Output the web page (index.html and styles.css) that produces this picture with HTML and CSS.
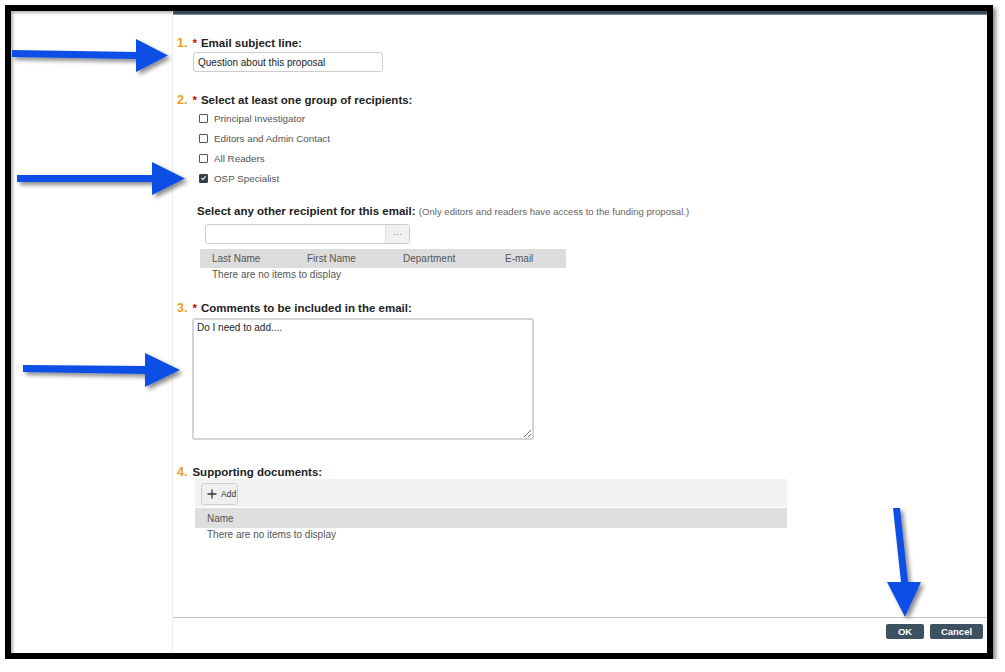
FILE: index.html
```html
<!DOCTYPE html>
<html lang="en">
  <head>
    <meta charset="UTF-8" />
    <meta name="viewport" content="width=device-width, initial-scale=1.0" />
    <title>Email about this proposal</title>
    <link rel="stylesheet" href="styles.css">
  </head>
  <body>
    <div class="frame">
      <div class="side"></div>
      <div class="main">
        <div class="topbar"></div>
        <div class="form">
          <!-- 1. subject -->
          <div class="field field-subject">
            <div class="label"><span class="num">1.</span><span class="req">*</span>Email subject line:</div>
            <input class="text-input subject" type="text" value="Question about this proposal" />
          </div>

          <!-- 2. recipients -->
          <div class="field field-groups">
            <div class="label"><span class="num">2.</span><span class="req">*</span>Select at least one group of recipients:</div>
            <div class="checks">
              <label class="check"><span class="box"></span>Principal Investigator</label>
              <label class="check"><span class="box"></span>Editors and Admin Contact</label>
              <label class="check"><span class="box"></span>All Readers</label>
              <label class="check">
                <span class="box checked">
                  <svg viewBox="0 0 10 10"><path d="M2 5.2 4.1 7.2 8 2.8" fill="none" stroke="#fff" stroke-width="1.6" /></svg>
                </span>OSP Specialist
              </label>
            </div>
            <div class="other">
              <div class="other-label">Select any other recipient for this email: <span class="hint">(Only editors and readers have access to the funding proposal.)</span></div>
              <div class="picker">
                <input class="picker-input" type="text" />
                <span class="picker-btn">&middot;&middot;&middot;</span>
              </div>
              <div class="grid grid-people">
                <div class="grid-head">
                  <span class="col col-last">Last Name</span>
                  <span class="col col-first">First Name</span>
                  <span class="col col-dept">Department</span>
                  <span class="col">E-mail</span>
                </div>
                <div class="grid-empty">There are no items to display</div>
              </div>
            </div>
          </div>

          <!-- 3. comments -->
          <div class="field field-comments">
            <div class="label"><span class="num">3.</span><span class="req">*</span>Comments to be included in the email:</div>
            <textarea class="comments">Do I need to add....</textarea>
          </div>

          <!-- 4. documents -->
          <div class="field field-docs">
            <div class="label"><span class="num">4.</span>Supporting documents:</div>
            <div class="docs">
              <div class="docs-toolbar">
                <button type="button" class="add-btn">
                  <svg viewBox="0 0 10 10"><path d="M5 0.5v9M0.5 5h9" stroke="#333" stroke-width="1.3" /></svg>
                  <span>Add</span>
                </button>
              </div>
              <div class="grid-head docs-head"><span class="col">Name</span></div>
              <div class="grid-empty docs-empty">There are no items to display</div>
            </div>
          </div>
        </div>
        <div class="footer">
          <button type="button" class="btn btn-ok">OK</button>
          <button type="button" class="btn btn-cancel">Cancel</button>
        </div>
      </div>
    </div>

    <!-- annotation arrows over the screenshot -->
    <svg class="arrows" viewBox="0 0 1005 672">
      <defs>
        <filter id="shade" x="-20%" y="-20%" width="140%" height="140%">
          <feDropShadow dx="3" dy="3" stdDeviation="2" flood-color="#000" flood-opacity="0.45" />
        </filter>
      </defs>
      <g fill="#0a50e6" filter="url(#shade)">
        <polygon points="12,50 136,52 136,39 168,55.5 136,72 136,59 12,57" />
        <polygon points="17,175 152,175 152,162 185,178.5 152,195 152,182 17,182" />
        <polygon points="23,365 145,366 145,353 180,370 145,387 145,374 23,372" />
        <polygon points="893,508 900,508 908,582 921,582 905,617 887,582 901,582" />
      </g>
    </svg>
  </body>
</html>
```

FILE: styles.css
```css
:root {
  --slate: #3e5160;
  --line: #cccccc;
  --text: #555555;
  --head: #dcdcdc;
}

body {
  margin: 0;
  background: #fff;
  font-family: "Liberation Sans", Arial, sans-serif;
  color: var(--text);
  overflow: hidden;
}

.frame {
  margin: 5px 0 0 5px;
  width: 976px;
  height: 642px;
  border: 6px solid #000;
  background: #fff;
  box-shadow: 3px 3px 4px rgba(0, 0, 0, 0.45), inset 3px 3px 3px -1px rgba(0, 0, 0, 0.3);
  display: flex;
}

.side {
  width: 161px;
  border-right: 1px solid #ededed;
}

.main {
  flex: 1;
  display: flex;
  flex-direction: column;
  background: #fff;
}

.topbar {
  height: 3px;
  background: #3a4a56;
  border-bottom: 1px solid #788c99;
}

.form {
  flex: 1;
  padding-left: 4px;
}

/* numbered labels */
.label {
  font-size: 11.5px;
  line-height: 14px;
  font-weight: bold;
  color: #222;
}

.num {
  color: #f29a1c;
  font-size: 12.5px;
  margin-right: 5px;
}

.req {
  color: #d40000;
  margin-right: 4px;
}

.field-subject { margin-top: 21px; }
.field-groups { margin-top: 21px; }
.field-comments { margin-top: 19px; }
.field-docs { margin-top: 25px; }

.text-input,
.picker-input,
.comments {
  font-family: "Liberation Sans", Arial, sans-serif;
  font-size: 10px;
  color: #222;
  border: 1px solid var(--line);
  border-radius: 3px;
  outline: none;
  box-sizing: border-box;
}

.subject {
  display: block;
  margin: 2px 0 0 16px;
  width: 190px;
  height: 20px;
  padding: 0 4px;
}

/* checkboxes */
.checks {
  margin: 1px 0 0 22px;
}

.check {
  display: flex;
  align-items: center;
  height: 20px;
  font-size: 9.8px;
  color: var(--text);
}

.box {
  width: 7px;
  height: 7px;
  border: 1px solid #555;
  border-radius: 1px;
  margin-right: 6px;
  display: flex;
  align-items: center;
  justify-content: center;
}

.box.checked {
  background: #34414c;
  border-color: #34414c;
}

.box svg {
  width: 8px;
  height: 8px;
}

/* other recipients */
.other {
  margin: 16px 0 0 20px;
}

.other-label {
  font-size: 11.5px;
  line-height: 14px;
  font-weight: bold;
  color: #222;
}

.hint {
  font-weight: normal;
  font-size: 9.6px;
  color: #666;
}

.picker {
  display: flex;
  margin: 5px 0 0 8px;
  width: 205px;
  height: 20px;
  border: 1px solid var(--line);
  border-radius: 3px;
  box-sizing: border-box;
  overflow: hidden;
}

.picker-input {
  flex: 1;
  border: none;
  border-radius: 0;
}

.picker-btn {
  width: 23px;
  background: #f0f0f0;
  border-left: 1px solid #e0e0e0;
  font-size: 9px;
  color: #777;
  text-align: center;
  line-height: 18px;
}

.grid-people {
  margin: 5px 0 0 3px;
  width: 366px;
}

.grid-head {
  display: flex;
  height: 19px;
  align-items: center;
  background: var(--head);
  font-size: 10px;
  color: var(--text);
  padding-left: 12px;
}

.col-last { width: 95px; }
.col-first { width: 96px; }
.col-dept { width: 102px; }

.grid-empty {
  font-size: 10px;
  line-height: 14px;
  padding-left: 12px;
  color: var(--text);
}

/* comments */
.comments {
  display: block;
  margin: 3px 0 0 15px;
  width: 342px;
  height: 122px;
  padding: 2px 3px;
  border: 2px solid #d4d4d4;
  resize: both;
}

/* supporting documents */
.docs {
  margin: 0 0 0 18px;
  width: 592px;
}

.docs-toolbar {
  height: 29px;
  background: #f2f2f2;
  border-bottom: 1px solid #fff;
  padding: 4px 0 0 6px;
  box-sizing: border-box;
}

.add-btn {
  display: flex;
  align-items: center;
  gap: 4px;
  height: 22px;
  width: 37px;
  padding: 0 0 0 5px;
  background: #efefef;
  border: 1px solid #cfcfcf;
  border-radius: 3px;
  font-family: "Liberation Sans", Arial, sans-serif;
  font-size: 8.5px;
  color: #333;
  box-sizing: border-box;
}

.add-btn svg {
  width: 10px;
  height: 10px;
}

.docs-head {
  height: 20px;
  background: #dddfde;
}

/* footer buttons */
.footer {
  height: 29px;
  border-top: 1px solid #c6c6c6;
  display: flex;
  justify-content: flex-end;
  align-items: flex-start;
  gap: 6px;
  padding: 6px 4px 0 0;
}

.btn {
  height: 15px;
  padding: 0;
  border: none;
  border-radius: 2px;
  background: var(--slate);
  color: #fff;
  font-family: "Liberation Sans", Arial, sans-serif;
  font-weight: bold;
  font-size: 9.5px;
}

.btn-ok { width: 38px; }
.btn-cancel { width: 53px; }

/* annotation layer */
.arrows {
  position: absolute;
  left: 0;
  top: 0;
  width: 1005px;
  height: 672px;
  pointer-events: none;
}
```
